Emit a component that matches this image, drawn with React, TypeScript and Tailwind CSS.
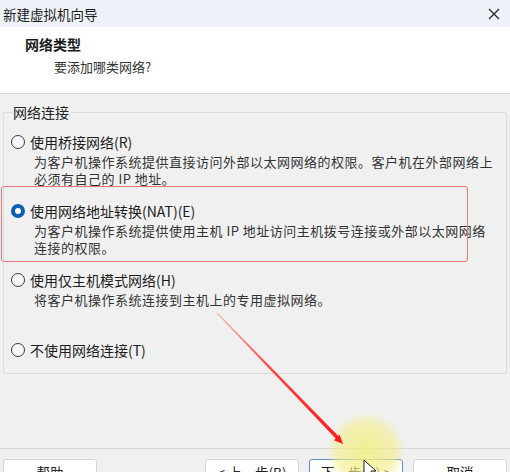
export default function App() {
  const font = { fontFamily: '"Noto Sans CJK SC", "Noto Sans", sans-serif' };
  return (
    <div
      className="relative w-[510px] h-[472px] overflow-hidden bg-[#f0f0f0] text-[#1c1c1c] font-['Noto_Sans_CJK_SC',sans-serif]"
      style={font}
    >
      {/* title bar */}
      <div className="h-[27px] bg-[#eef2f8] flex items-center justify-between pl-[3px] pr-[8px]">
        <span className="text-[13.5px] leading-[18px]">新建虚拟机向导</span>
        <svg width="12" height="12" viewBox="0 0 12 12" className="mr-[2px]">
          <path d="M1 1 L11 11 M11 1 L1 11" stroke="#222" strokeWidth="1.2" fill="none" />
        </svg>
      </div>

      {/* header */}
      <div className="h-[67px] bg-white border-b border-[#d9d9d9] pt-[8px]">
        <div className="pl-[25px] text-[14px] leading-[18px] font-bold">网络类型</div>
        <div className="pl-[54px] mt-[5px] text-[13px] leading-[18px] text-[#333]">要添加哪类网络?</div>
      </div>

      {/* body */}
      <div className="px-[3px] pt-[9px] h-[354px]">
        <fieldset className="border border-[#dcdcdc] rounded-[2px] pl-[7px] pr-[8px] pb-[14px]">
          <legend className="ml-[1px] px-[1px] text-[14px] leading-[18px] text-[#222]">网络连接</legend>

          <div className="mt-[12px]">
            <Radio label="使用桥接网络(R)" />
            <Desc lines={["为客户机操作系统提供直接访问外部以太网网络的权限。客户机在外部网络上", "必须有自己的 IP 地址。"]} />
          </div>

          <div className="mt-[15px]">
            <Radio label="使用网络地址转换(NAT)(E)" checked />
            <Desc lines={["为客户机操作系统提供使用主机 IP 地址访问主机拨号连接或外部以太网网络", "连接的权限。"]} />
          </div>

          <div className="mt-[15px]">
            <Radio label="使用仅主机模式网络(H)" />
            <Desc lines={["将客户机操作系统连接到主机上的专用虚拟网络。"]} />
          </div>

          <div className="mt-[33px]">
            <Radio label="不使用网络连接(T)" />
          </div>
        </fieldset>
      </div>

      {/* footer */}
      <div className="border-t border-[#d6d6d6] pt-[10px] px-[3px] flex">
        <Btn label="帮助" />
        <div className="flex-1" />
        <div className="flex gap-[10px]">
          <Btn label="< 上一步(B)" />
          <Btn label="下一步(N) >" primary />
          <Btn label="取消" />
        </div>
      </div>

      {/* annotation: red box */}
      <div className="absolute left-[1px] top-[186px] w-[467px] h-[76px] border-[1.5px] border-[#f07777] rounded-[3px] pointer-events-none" />

      {/* annotation: arrow, cursor highlight */}
      <svg className="absolute left-0 top-0 pointer-events-none" width="510" height="472" viewBox="0 0 510 472">
        <defs>
          <radialGradient id="hl" cx="50%" cy="50%" r="50%">
            <stop offset="0%" stopColor="#f2ee80" stopOpacity="0.85" />
            <stop offset="70%" stopColor="#f2ee8a" stopOpacity="0.6" />
            <stop offset="100%" stopColor="#f2ee8a" stopOpacity="0" />
          </radialGradient>
          <linearGradient id="ar" x1="217" y1="313" x2="343" y2="444" gradientUnits="userSpaceOnUse">
            <stop offset="0%" stopColor="#ff4040" stopOpacity="0.3" />
            <stop offset="40%" stopColor="#ff2a2a" stopOpacity="0.85" />
            <stop offset="100%" stopColor="#ff1a1a" stopOpacity="1" />
          </linearGradient>
        </defs>
        <circle cx="366" cy="452" r="40" fill="url(#hl)" />
        <polygon points="216.6,313.4 217.4,312.6 338.8,436.4 336.2,439.0" fill="url(#ar)" />
        <polygon points="343,444 333.9,440.3 339.7,434.7" fill="#ff1a1a" />
        <path
          d="M364 460 L364 476 L368 472 L371 479 L374 478 L371 471 L376 471 Z"
          fill="#fff"
          stroke="#222"
          strokeWidth="1"
          strokeLinejoin="round"
        />
      </svg>
    </div>
  );
}

function Radio({ label, checked }: { label: string; checked?: boolean }) {
  return (
    <div className="flex items-center h-[18px]">
      {checked ? (
        <span className="w-[14px] h-[14px] rounded-full bg-[#0a5fb4] flex items-center justify-center">
          <span className="w-[6px] h-[6px] rounded-full bg-white" />
        </span>
      ) : (
        <span className="w-[14px] h-[14px] rounded-full border border-[#3a3a3a] bg-[#f7f7f7]" />
      )}
      <span className="ml-[5px] text-[14px] leading-[18px] whitespace-nowrap">{label}</span>
    </div>
  );
}

function Desc({ lines }: { lines: string[] }) {
  return (
    <div className="mt-[2px] pl-[23px] text-[13px] tracking-[0.5px] leading-[17px] text-[#333]">
      {lines.map((l) => (
        <div key={l} className="whitespace-nowrap">{l}</div>
      ))}
    </div>
  );
}

function Btn({ label, primary }: { label: string; primary?: boolean }) {
  return (
    <div
      className={
        primary
          ? "w-[94px] h-[26px] bg-white border border-[#5b8fc9] rounded-[3px] flex items-center justify-center text-[13.5px] leading-[16px] text-[#222]"
          : "w-[94px] h-[26px] bg-white border border-[#d4d4d4] rounded-[3px] flex items-center justify-center text-[13.5px] leading-[16px] text-[#222]"
      }
    >
      {label}
    </div>
  );
}
